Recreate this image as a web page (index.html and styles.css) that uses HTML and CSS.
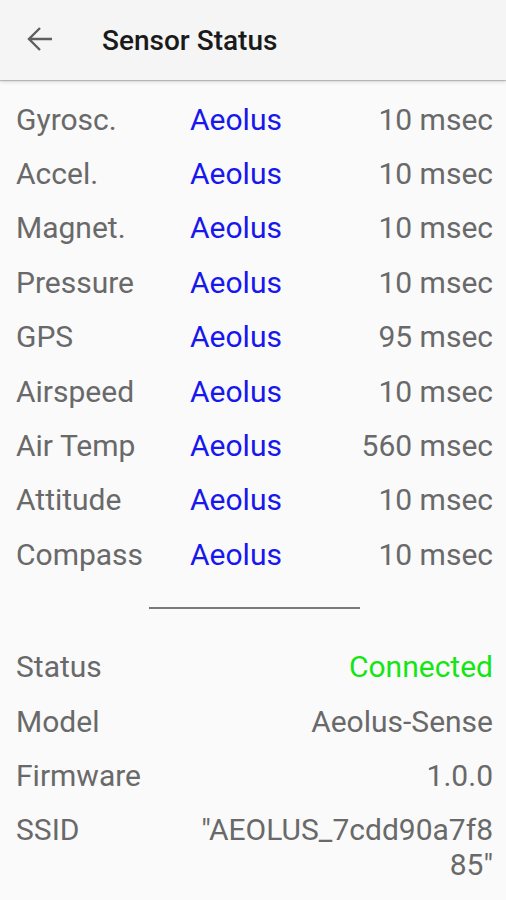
FILE: index.html
```html
<!DOCTYPE html>
<html>
<head>
<meta charset="utf-8">
<link rel="stylesheet" href="styles.css">
</head>
<body>
<header class="appbar">
  <svg class="back" width="26" height="26" viewBox="0 0 26 26"><path d="M25 13H2M13 2L2 13l11 11" fill="none" stroke="#5f5f5f" stroke-width="2.4" stroke-linecap="butt" stroke-linejoin="miter"/></svg>
  <h1 class="title">Sensor Status</h1>
</header>
<main class="content">
  <div class="sensors">
    <div class="srow"><span class="lbl">Gyrosc.</span><span class="src">Aeolus</span><span class="val">10 msec</span></div>
    <div class="srow"><span class="lbl">Accel.</span><span class="src">Aeolus</span><span class="val">10 msec</span></div>
    <div class="srow"><span class="lbl">Magnet.</span><span class="src">Aeolus</span><span class="val">10 msec</span></div>
    <div class="srow"><span class="lbl">Pressure</span><span class="src">Aeolus</span><span class="val">10 msec</span></div>
    <div class="srow"><span class="lbl">GPS</span><span class="src">Aeolus</span><span class="val">95 msec</span></div>
    <div class="srow"><span class="lbl">Airspeed</span><span class="src">Aeolus</span><span class="val">10 msec</span></div>
    <div class="srow"><span class="lbl">Air Temp</span><span class="src">Aeolus</span><span class="val">560 msec</span></div>
    <div class="srow"><span class="lbl">Attitude</span><span class="src">Aeolus</span><span class="val">10 msec</span></div>
    <div class="srow"><span class="lbl">Compass</span><span class="src">Aeolus</span><span class="val">10 msec</span></div>
  </div>
  <hr class="divider">
  <div class="info">
    <div class="irow"><span class="lbl">Status</span><span class="ival ok">Connected</span></div>
    <div class="irow"><span class="lbl">Model</span><span class="ival">Aeolus-Sense</span></div>
    <div class="irow"><span class="lbl">Firmware</span><span class="ival">1.0.0</span></div>
    <div class="irow"><span class="lbl">SSID</span><span class="ival wrap">"AEOLUS_7cdd90a7f885"</span></div>
  </div>
</main>
</body>
</html>
```
FILE: styles.css
```css
html, body {
  margin: 0;
  padding: 0;
  background: #fafafa;
  font-family: Roboto, "Noto Sans", sans-serif;
}
.appbar {
  height: 80px;
  background: #f5f5f5;
  display: flex;
  align-items: center;
  box-shadow: 0 1px 1px rgba(0,0,0,0.2), 0 2px 4px rgba(0,0,0,0.12);
  position: relative;
}
.back {
  margin-left: 27px;
  margin-right: 49px;
  margin-top: -2px;
}
.title {
  margin: 0;
  font-size: 28px;
  font-weight: 500;
  color: #1a1a1a;
  letter-spacing: 0;
}
.content {
  padding: 12px 13px 0 16px;
}
.srow {
  display: grid;
  grid-template-columns: 174px 1fr auto;
  height: 54.4px;
  align-items: center;
  font-size: 30px;
  line-height: 35px;
}
.lbl {
  color: #696969;
}
.src {
  color: #1717ee;
}
.val {
  color: #696969;
  text-align: right;
}
.divider {
  width: 211px;
  margin: 25px auto 31px;
  border: 0;
  height: 2px;
  background: #7a7a7a;
}
.irow {
  display: flex;
  justify-content: space-between;
  padding: 9.7px 0;
  font-size: 30px;
  line-height: 35px;
}
.ival {
  color: #696969;
  text-align: right;
}
.ok {
  color: #14e614;
}
.wrap {
  width: 298px;
  word-break: break-all;
}
```
